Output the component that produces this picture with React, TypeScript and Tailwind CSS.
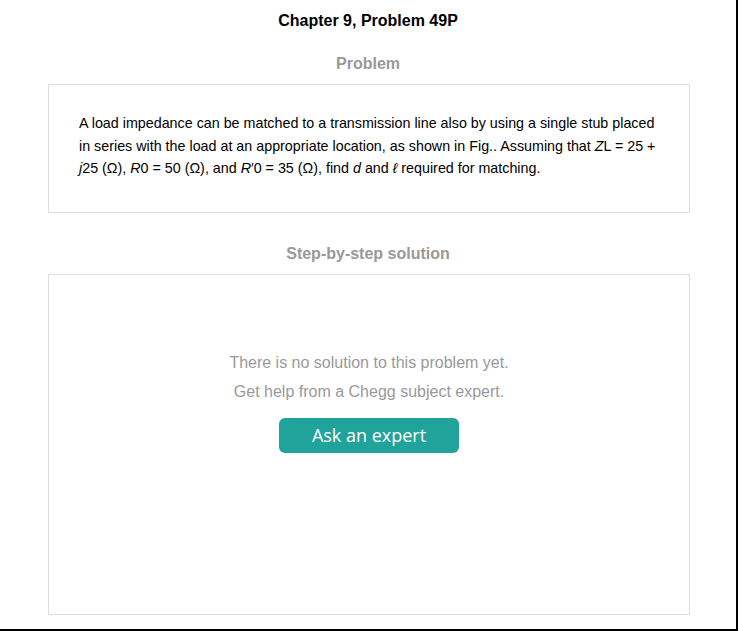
import React from "react";

export default function App() {
  return (
    <div
      className="w-[738px] h-[631px] bg-white border-r-2 border-b-2 border-black box-border flex flex-col"
      style={{ fontFamily: '"Liberation Sans", Arial, sans-serif' }}
    >
      <h1 className="mt-[12px] text-center text-[16px] leading-[18px] font-bold text-black">
        Chapter 9, Problem 49P
      </h1>
      <h2 className="mt-[25px] text-center text-[16px] leading-[18px] font-bold text-[#999999]">
        Problem
      </h2>
      <div className="mt-[11px] ml-[48px] w-[642px] h-[129px] border border-[#dddddd] pt-[27px] pl-[30px] pr-[10px]">
        <p className="text-[14.3px] leading-[22.5px] text-black whitespace-nowrap">
          A load impedance can be matched to a transmission line also by using a single stub placed
          <br />
          in series with the load at an appropriate location, as shown in Fig.. Assuming that <i>Z</i>L = 25 +
          <br />
          <i>j</i>25 (Ω), <i>R</i>0 = 50 (Ω), and <i>R</i>′0 = 35 (Ω), find <i>d</i> and <i>ℓ</i> required for matching.
        </p>
      </div>
      <h2 className="mt-[32px] text-center text-[16px] leading-[18px] font-bold text-[#999999]">
        Step-by-step solution
      </h2>
      <div className="mt-[11px] ml-[48px] w-[642px] h-[341px] border border-[#dddddd] flex flex-col items-center pt-[73px]">
        <p className="text-[16px] leading-[29px] text-[#999999]">There is no solution to this problem yet.</p>
        <p className="text-[16px] leading-[29px] text-[#999999]">Get help from a Chegg subject expert.</p>
        <button
          className="mt-[12px] w-[180px] h-[35px] rounded-[6px] bg-[#20a39a] text-white text-[18px] leading-[35px]"
          style={{ fontFamily: '"Open Sans", "DejaVu Sans", sans-serif' }}
        >
          Ask an expert
        </button>
      </div>
    </div>
  );
}
